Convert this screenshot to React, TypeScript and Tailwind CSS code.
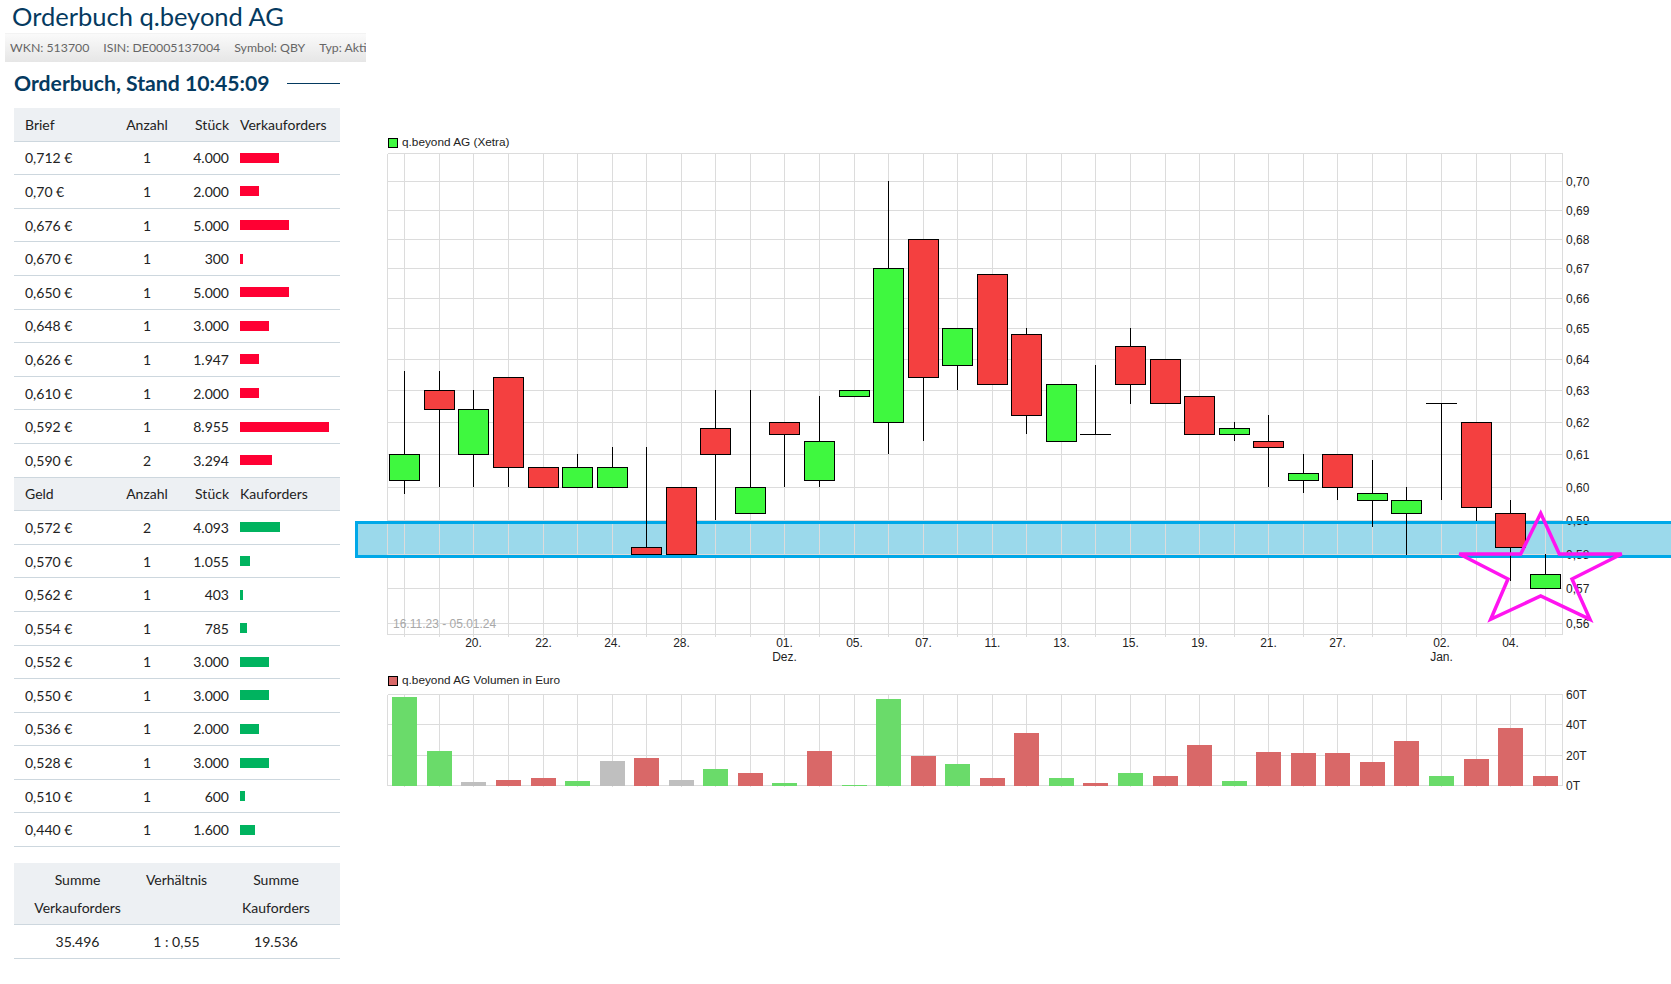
type Order = { price: string; count: number; qty: string; bar: number }

const asks: Order[] = [
  { price: '0,712 €', count: 1, qty: '4.000', bar: 39 },
  { price: '0,70 €', count: 1, qty: '2.000', bar: 19 },
  { price: '0,676 €', count: 1, qty: '5.000', bar: 49 },
  { price: '0,670 €', count: 1, qty: '300', bar: 3 },
  { price: '0,650 €', count: 1, qty: '5.000', bar: 49 },
  { price: '0,648 €', count: 1, qty: '3.000', bar: 29 },
  { price: '0,626 €', count: 1, qty: '1.947', bar: 19 },
  { price: '0,610 €', count: 1, qty: '2.000', bar: 19 },
  { price: '0,592 €', count: 1, qty: '8.955', bar: 89 },
  { price: '0,590 €', count: 2, qty: '3.294', bar: 32 },
]

const bids: Order[] = [
  { price: '0,572 €', count: 2, qty: '4.093', bar: 40 },
  { price: '0,570 €', count: 1, qty: '1.055', bar: 10 },
  { price: '0,562 €', count: 1, qty: '403', bar: 3 },
  { price: '0,554 €', count: 1, qty: '785', bar: 7 },
  { price: '0,552 €', count: 1, qty: '3.000', bar: 29 },
  { price: '0,550 €', count: 1, qty: '3.000', bar: 29 },
  { price: '0,536 €', count: 1, qty: '2.000', bar: 19 },
  { price: '0,528 €', count: 1, qty: '3.000', bar: 29 },
  { price: '0,510 €', count: 1, qty: '600', bar: 5 },
  { price: '0,440 €', count: 1, qty: '1.600', bar: 15 },
]

const slots = [
  404, 439, 473, 508, 543, 577, 612, 646, 681, 715, 750, 784, 819, 854, 888, 923, 957, 992, 1026,
  1061, 1095, 1130, 1165, 1199, 1234, 1268, 1303, 1337, 1372, 1406, 1441, 1476, 1510, 1545,
]

const priceLines = [
  181, 210, 239, 268, 298, 328, 359, 390, 422, 454, 487, 520, 554, 588, 623,
]

const priceLabels = [
  '0,70', '0,69', '0,68', '0,67', '0,66', '0,65', '0,64', '0,63', '0,62', '0,61', '0,60', '0,59',
  '0,58', '0,57', '0,56',
]

const dateLabels: { slot: number; day: string; month?: string }[] = [
  { slot: 2, day: '20.' },
  { slot: 4, day: '22.' },
  { slot: 6, day: '24.' },
  { slot: 8, day: '28.' },
  { slot: 11, day: '01.', month: 'Dez.' },
  { slot: 13, day: '05.' },
  { slot: 15, day: '07.' },
  { slot: 17, day: '11.' },
  { slot: 19, day: '13.' },
  { slot: 21, day: '15.' },
  { slot: 23, day: '19.' },
  { slot: 25, day: '21.' },
  { slot: 27, day: '27.' },
  { slot: 30, day: '02.', month: 'Jan.' },
  { slot: 32, day: '04.' },
]

// up, wick top, wick bottom, body top, body bottom (page pixels)
const candles: [boolean, number, number, number, number][] = [
  [true, 371, 494, 454, 480],
  [false, 371, 487, 390, 409],
  [true, 390, 487, 409, 454],
  [false, 377, 487, 377, 467],
  [false, 467, 487, 467, 487],
  [true, 454, 487, 467, 487],
  [true, 447, 487, 467, 487],
  [false, 447, 554, 547, 554],
  [false, 487, 554, 487, 554],
  [false, 390, 520, 428, 454],
  [true, 390, 513, 487, 513],
  [false, 422, 487, 422, 434],
  [true, 396, 487, 441, 480],
  [true, 390, 396, 390, 396],
  [true, 181, 454, 268, 422],
  [false, 239, 441, 239, 377],
  [true, 328, 390, 328, 365],
  [false, 274, 384, 274, 384],
  [false, 328, 434, 334, 415],
  [true, 384, 441, 384, 441],
  [false, 0, 0, 0, 0],
  [false, 328, 404, 346, 384],
  [false, 359, 403, 359, 403],
  [false, 396, 434, 396, 434],
  [true, 422, 441, 428, 434],
  [false, 415, 487, 441, 447],
  [true, 454, 493, 473, 480],
  [false, 454, 500, 454, 487],
  [true, 460, 527, 493, 500],
  [true, 487, 555, 500, 513],
  [false, 0, 0, 0, 0],
  [false, 422, 521, 422, 507],
  [false, 500, 581, 513, 547],
  [true, 554, 588, 574, 588],
]

// no body, just a stem with a dash on it
const dojis = [
  { slot: 20, top: 365, bottom: 434, dash: 434, from: 1080, to: 1111 },
  { slot: 30, top: 403, bottom: 500, dash: 403, from: 1426, to: 1457 },
]

const volumes: ['g' | 'r' | 'n', number][] = [
  ['g', 697], ['g', 751], ['n', 782], ['r', 780], ['r', 778], ['g', 781], ['n', 761], ['r', 758],
  ['n', 780], ['g', 769], ['r', 773], ['g', 783], ['r', 751], ['g', 785], ['g', 699], ['r', 756],
  ['g', 764], ['r', 778], ['r', 733], ['g', 778], ['r', 783], ['g', 773], ['r', 776], ['r', 745],
  ['g', 781], ['r', 752], ['r', 753], ['r', 753], ['r', 762], ['r', 741], ['g', 776], ['r', 759],
  ['r', 728], ['r', 776],
]

const volumeColor = { g: '#6adb6a', r: '#d96868', n: '#bfbfbf' }

const rowGrid = 'grid grid-cols-[100px_66px_49px_111px] items-center h-[33.6px] border-b border-[#cdd7de]'

function HeaderRow({ side, label }: { side: string; label: string }) {
  return (
    <div className={`${rowGrid} bg-[#edf0f3]`}>
      <span className="pl-[11px]">{side}</span>
      <span className="text-center">Anzahl</span>
      <span className="text-right">Stück</span>
      <span className="pl-[11px]">{label}</span>
    </div>
  )
}

function OrderRow({ order, barClass }: { order: Order; barClass: string }) {
  return (
    <div className={rowGrid}>
      <span className="pl-[11px]">{order.price}</span>
      <span className="text-center">{order.count}</span>
      <span className="text-right">{order.qty}</span>
      <span className="pl-[11px]">
        <span className={`block h-[10px] ${barClass}`} style={{ width: order.bar }} />
      </span>
    </div>
  )
}

function OrderBook() {
  return (
    <aside className="w-[366px] shrink-0 pl-[5px]">
      <h1 className="h-[33px] pl-[7px] text-[25.5px] leading-[33px] text-[#053a60]">
        Orderbuch q.beyond AG
      </h1>
      <div className="flex h-[29px] items-center gap-[14px] overflow-hidden whitespace-nowrap border-t border-[#f3f3f3] bg-gradient-to-b from-[#fafafa] to-[#e6e6e6] pl-[5px] text-[12.3px] text-[#666]">
        <span>WKN: 513700</span>
        <span>ISIN: DE0005137004</span>
        <span>Symbol: QBY</span>
        <span>Typ: Aktie</span>
      </div>
      <div className="ml-[9px] w-[326px]">
        <div className="flex h-[46px] items-center justify-between pb-[3px]">
          <h2 className="text-[21.2px] font-bold text-[#053a60]">Orderbuch, Stand 10:45:09</h2>
          <span className="h-px w-[53px] bg-[#053a60]" />
        </div>
        <div className="text-[14px] text-[#222]">
          <HeaderRow side="Brief" label="Verkauforders" />
          {asks.map((o) => (
            <OrderRow key={o.price} order={o} barClass="bg-[#ff0033]" />
          ))}
          <HeaderRow side="Geld" label="Kauforders" />
          {bids.map((o) => (
            <OrderRow key={o.price} order={o} barClass="bg-[#00b35f]" />
          ))}
          <div className="mt-[16px] grid grid-cols-[127px_71px_128px] border-b border-[#cdd7de] bg-[#edf0f3] pt-[3px] pb-[2px] text-center leading-[28px]">
            <span>
              Summe
              <br />
              Verkauforders
            </span>
            <span>Verhältnis</span>
            <span>
              Summe
              <br />
              Kauforders
            </span>
          </div>
          <div className="grid h-[34px] grid-cols-[127px_71px_128px] items-center border-b border-[#cdd7de] text-center">
            <span>35.496</span>
            <span>1 : 0,55</span>
            <span>19.536</span>
          </div>
        </div>
      </div>
    </aside>
  )
}

function PriceChart() {
  return (
    <svg width={1287} height={520} viewBox="384 150 1287 520" className="block">
      <g stroke="#dcdcdc" shapeRendering="crispEdges">
        <line x1={387.5} x2={1562.5} y1={153.5} y2={153.5} />
        <line x1={387.5} x2={1562.5} y1={634.5} y2={634.5} />
        <line x1={387.5} x2={387.5} y1={153.5} y2={634.5} />
        <line x1={1562.5} x2={1562.5} y1={153.5} y2={634.5} />
        {priceLines.map((y) => (
          <line key={y} x1={387.5} x2={1562.5} y1={y + 0.5} y2={y + 0.5} />
        ))}
        {slots.map((x) => (
          <line key={x} x1={x + 0.5} x2={x + 0.5} y1={153.5} y2={636.5} />
        ))}
      </g>
      <g fill="#222" fontSize={12}>
        {priceLabels.map((label, i) => (
          <text key={label} x={1566} y={priceLines[i] + 5}>
            {label}
          </text>
        ))}
        {dateLabels.map((d) => (
          <g key={d.slot} textAnchor="middle">
            <text x={slots[d.slot] + 0.5} y={647}>
              {d.day}
            </text>
            {d.month && (
              <text x={slots[d.slot] + 0.5} y={661}>
                {d.month}
              </text>
            )}
          </g>
        ))}
      </g>
      <text x={393} y={628} fontSize={12} fill="#a8a8a8">
        16.11.23 - 05.01.24
      </text>
      <g fill="#00a8e8">
        <rect x={384} y={521} width={1287} height={3} />
        <rect x={384} y={555} width={1287} height={3} />
      </g>
      <g stroke="#000" shapeRendering="crispEdges">
        {candles.map(([up, wickTop, wickBottom, top, bottom], i) => {
          if (top === 0) return null
          const x = slots[i] + 0.5
          return (
            <g key={i}>
              <line x1={x} x2={x} y1={wickTop} y2={wickBottom} />
              <rect
                x={x - 15}
                y={top + 0.5}
                width={30}
                height={bottom - top}
                fill={up ? '#3ff83f' : '#f44040'}
              />
            </g>
          )
        })}
        {dojis.map((d) => (
          <g key={d.slot}>
            <line x1={slots[d.slot] + 0.5} x2={slots[d.slot] + 0.5} y1={d.top} y2={d.bottom} />
            <line x1={d.from} x2={d.to} y1={d.dash + 0.5} y2={d.dash + 0.5} />
          </g>
        ))}
      </g>
    </svg>
  )
}

function VolumeChart() {
  const lines = [
    { y: 694, label: '60T' },
    { y: 724, label: '40T' },
    { y: 755, label: '20T' },
    { y: 785, label: '0T' },
  ]
  return (
    <svg width={1287} height={110} viewBox="384 690 1287 110" className="block">
      <g stroke="#dcdcdc" shapeRendering="crispEdges">
        {lines.map((l) => (
          <line key={l.y} x1={387.5} x2={1562.5} y1={l.y + 0.5} y2={l.y + 0.5} />
        ))}
        <line x1={387.5} x2={387.5} y1={694.5} y2={785.5} />
        <line x1={1562.5} x2={1562.5} y1={694.5} y2={785.5} />
        {slots.map((x) => (
          <line key={x} x1={x + 0.5} x2={x + 0.5} y1={694.5} y2={786.5} />
        ))}
      </g>
      {volumes.map(([kind, top], i) => (
        <rect
          key={i}
          x={slots[i] + 0.5 - 12.5}
          y={top}
          width={25}
          height={786 - top}
          fill={volumeColor[kind]}
        />
      ))}
      <g fill="#222" fontSize={12}>
        {lines.map((l) => (
          <text key={l.label} x={1566} y={l.y + 5}>
            {l.label}
          </text>
        ))}
      </g>
    </svg>
  )
}

function Legend({ swatch, children, className }: { swatch: string; children: string; className: string }) {
  return (
    <div className={`flex items-center gap-[4px] pl-[4px] text-[11.8px] text-[#222] ${className}`}>
      <span className={`h-[10px] w-[10px] border border-black ${swatch}`} />
      {children}
    </div>
  )
}

export default function App() {
  return (
    <div className="relative h-[984px] w-full overflow-hidden bg-white font-['Lato',sans-serif]">
      <div className="absolute left-[355px] top-[521px] h-[37px] w-[1320px] border-[3px] border-[#00a8e8] bg-[#9bd9eb]" />
      <div className="flex">
        <OrderBook />
        <main className="relative pl-[18px] pt-[135px] font-['Liberation_Sans',sans-serif]">
          <Legend swatch="bg-[#3ff83f]" className="h-[15px]">
            q.beyond AG (Xetra)
          </Legend>
          <PriceChart />
          <Legend swatch="bg-[#d96868]" className="h-[20px] pt-[1px]">
            q.beyond AG Volumen in Euro
          </Legend>
          <VolumeChart />
        </main>
      </div>
      <svg
        width={180}
        height={125}
        viewBox="1450 505 180 125"
        className="absolute left-[1450px] top-[505px]"
      >
        <polygon
          points="1540.7,513.3 1559.3,554 1621.7,554 1572,579 1590,619.3 1540.7,596 1490.7,619.3 1508,579 1459.3,554 1520.7,554"
          fill="none"
          stroke="#ff14f0"
          strokeWidth={3.5}
        />
      </svg>
    </div>
  )
}
